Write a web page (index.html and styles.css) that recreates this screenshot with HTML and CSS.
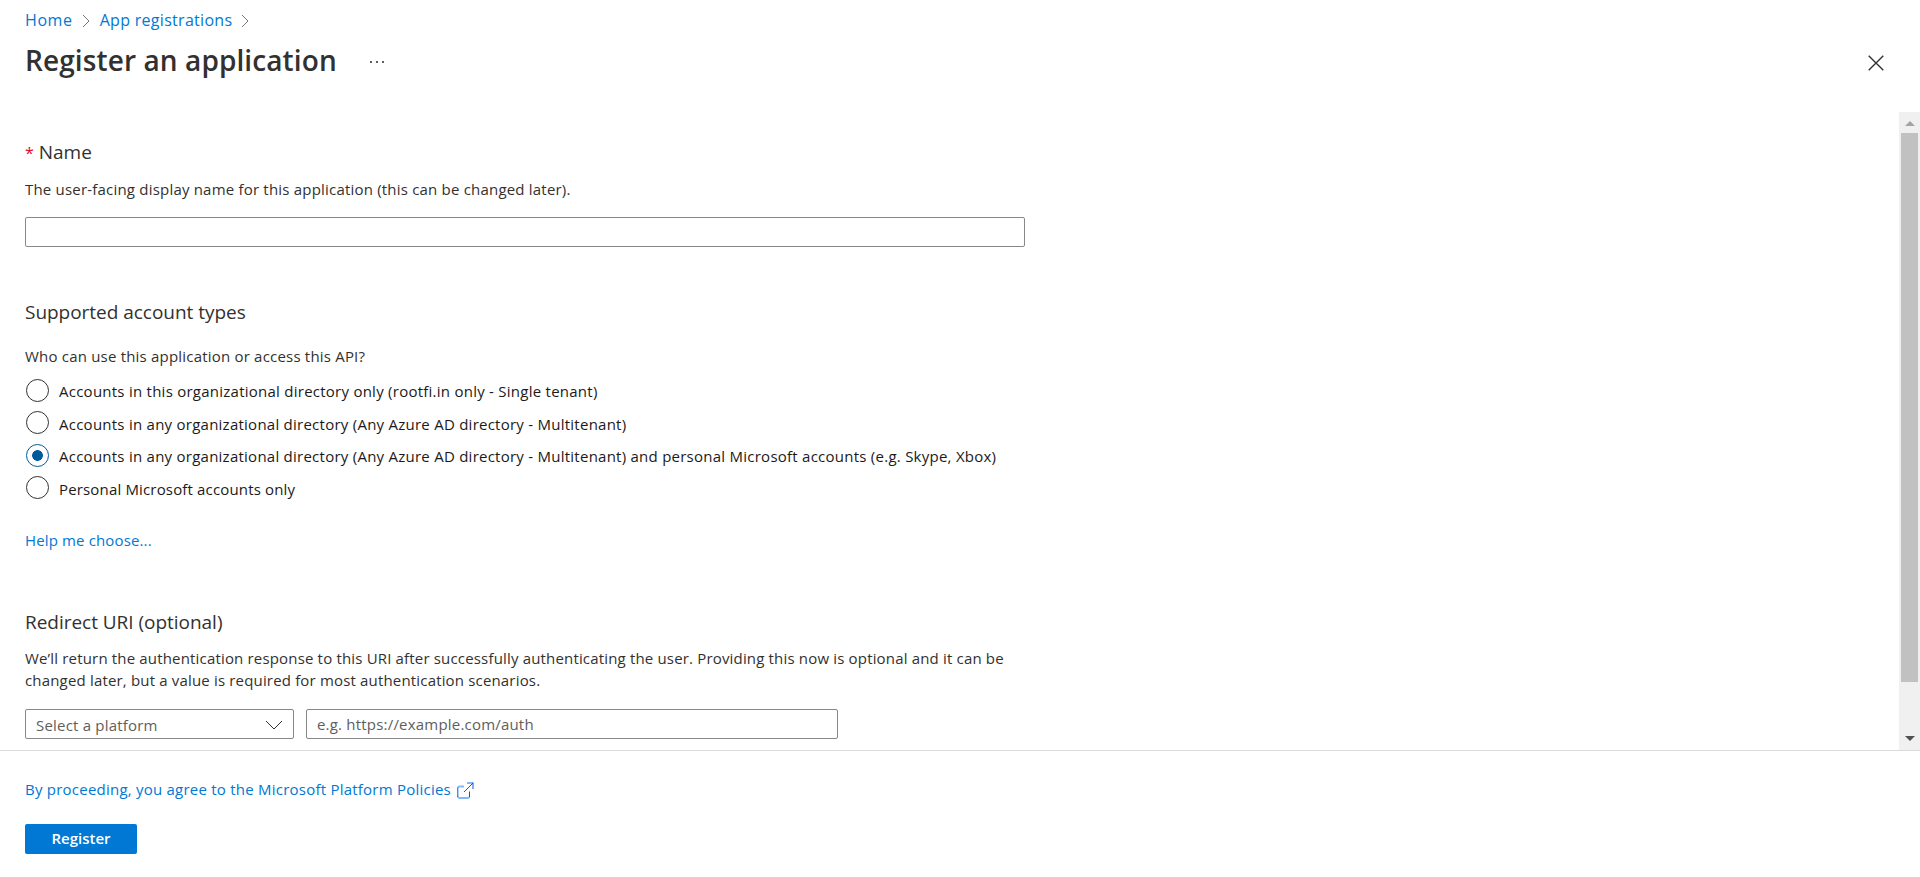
FILE: index.html
```html
<!DOCTYPE html>
<html lang="en">
<head>
    <meta charset="UTF-8">
    <meta name="viewport" content="width=device-width, initial-scale=1.0">
    <title>Register an application</title>
    <link rel="stylesheet" href="styles.css">
</head>
<body>
    <header class="header">
        <nav class="breadcrumb">
            <a href="#" class="crumb-home">Home</a>
            <svg class="crumb-arrow" width="8" height="14" viewBox="0 0 8 14"><path d="M1 1l6 6-6 6"/></svg>
            <a href="#" class="crumb-apps">App registrations</a>
            <svg class="crumb-arrow" width="8" height="14" viewBox="0 0 8 14"><path d="M1 1l6 6-6 6"/></svg>
        </nav>
        <div class="title-bar">
            <h1>Register an application</h1>
            <svg class="more" width="16" height="4" viewBox="0 0 16 4"><path d="M1 1h2v2H1zM7 1h2v2H7zM13 1h2v2h-2z"/></svg>
            <svg class="close" width="16" height="16" viewBox="0 0 16 16"><path d="M.7.7l14.6 14.6M15.3.7L.7 15.3"/></svg>
        </div>
    </header>

    <main class="content">
        <form class="form" id="registerForm">
            <h2 class="name-title"><span class="required">*</span>Name</h2>
            <p class="name-desc">The user-facing display name for this application (this can be changed later).</p>
            <input type="text" class="name-input" name="name">

            <h2 class="types-title">Supported account types</h2>
            <p class="types-desc">Who can use this application or access this API?</p>
            <div class="radios">
                <label><input type="radio" name="type"><span>Accounts in this organizational directory only (rootfi.in only - Single tenant)</span></label>
                <label><input type="radio" name="type"><span>Accounts in any organizational directory (Any Azure AD directory - Multitenant)</span></label>
                <label><input type="radio" name="type" checked><span>Accounts in any organizational directory (Any Azure AD directory - Multitenant) and personal Microsoft accounts (e.g. Skype, Xbox)</span></label>
                <label><input type="radio" name="type"><span class="personal">Personal Microsoft accounts only</span></label>
            </div>
            <a href="#" class="help">Help me choose...</a>

            <h2 class="uri-title">Redirect URI (optional)</h2>
            <p class="uri-desc">We’ll return the authentication response to this URI after successfully authenticating the user. Providing this now is optional and it can be<br>changed later, but a value is required for most authentication scenarios.</p>
            <div class="uri-row">
                <div class="select">
                    <span>Select a platform</span>
                    <svg width="18" height="10" viewBox="0 0 18 10"><path d="M1 1l8 8 8-8"/></svg>
                </div>
                <input type="text" class="uri-input" name="uri" placeholder="e.g. https://example.com/auth">
            </div>
        </form>
        <div class="scrollbar">
            <svg width="10" height="5" viewBox="0 0 10 5"><path class="up" d="M0 5l5-5 5 5z"/></svg>
            <div class="thumb"></div>
            <svg width="10" height="5" viewBox="0 0 10 5"><path class="down" d="M0 0h10l-5 5z"/></svg>
        </div>
    </main>

    <footer class="footer">
        <a href="#" class="policies">
            <span>By proceeding, you agree to the Microsoft Platform Policies</span>
            <svg width="17" height="17" viewBox="0 0 17 17"><path class="soft" d="M7 4.500H2.500q-1.500 0-1.500 1.500M1 14.500q0 1.500 1.500 1.500H11q1.500 0 1.500-1.500M10 1h6"/><path d="M.8 5.500v9.500M12.500 15V9.500M16 .5v6.500M15.800 1.200L7 10"/></svg>
        </a>
        <button type="submit" form="registerForm">Register</button>
    </footer>
</body>
</html>
```

FILE: styles.css
```css
* {
    box-sizing: border-box;
}

body {
    font-family: "Open Sans", "Noto Sans", sans-serif;
    font-size: 15px;
    line-height: 22px;
    letter-spacing: 0.2px;
    color: #323130;
    background: #fff;
    margin: 0;
    height: 877px;
    display: flex;
    flex-direction: column;
    overflow: hidden;
}

h1, h2, p {
    margin: 0;
    white-space: nowrap;
}

a {
    color: #0078d4;
    text-decoration: none;
}

svg {
    display: block;
    fill: none;
    stroke: #323130;
    flex-shrink: 0;
}

.header {
    height: 112px;
    padding: 9px 35px 0 25px;
}

.breadcrumb {
    display: flex;
    align-items: center;
    font-size: 16px;
}

.crumb-home {
    letter-spacing: 0.6px;
}

.crumb-apps {
    letter-spacing: 0.3px;
}

.crumb-arrow {
    margin: 1px 10px 0 9px;
    stroke: #767676;
}

.title-bar {
    display: flex;
    align-items: center;
    margin-top: 10px;
}

h1 {
    font-size: 28px;
    font-weight: 600;
    line-height: 38px;
    letter-spacing: 0.1px;
}

.more {
    margin: 4px 0 0 32px;
    fill: #605e5c;
    stroke: none;
}

.close {
    margin: 5px 1px 0 auto;
    stroke-width: 1.4;
}

.content {
    display: flex;
    height: 638px;
}

.form {
    flex: 1;
    padding: 27px 0 0 25px;
}

h2 {
    font-size: 19px;
    font-weight: 400;
    line-height: 26px;
    letter-spacing: -0.03px;
}

.required {
    color: #e00b1c;
    font-size: 16px;
    margin-right: 5px;
}

.name-desc {
    margin-top: 12px;
}

.name-input, .uri-input, .select {
    height: 30px;
    border: 1px solid #8a8886;
    border-radius: 2px;
    background: #fff;
}

.name-input {
    display: block;
    width: 1000px;
    margin-top: 17px;
}

.types-title {
    margin-top: 52px;
}

.types-desc {
    margin-top: 20px;
}

.radios {
    margin-top: 7px;
}

.radios label {
    display: flex;
    align-items: center;
    height: 32.5px;
    color: #1b1a19;
    white-space: nowrap;
    letter-spacing: 0.25px;
}

.radios span {
    padding-top: 2px;
}

.radios .personal {
    letter-spacing: 0.16px;
}

.radios input {
    appearance: none;
    width: 23px;
    height: 23px;
    margin: 0 10px 0 1px;
    border: 1px solid #323130;
    border-radius: 50%;
}

.radios input:checked {
    border-color: #005a9e;
    background: radial-gradient(circle, #005a9e 5px, #fff 5.7px);
}

.help {
    display: block;
    margin-top: 25px;
    letter-spacing: 0.14px;
}

.uri-title {
    margin-top: 58px;
}

.uri-desc {
    margin-top: 12px;
    letter-spacing: 0.17px;
}

.uri-row {
    display: flex;
    gap: 12px;
    margin-top: 18px;
}

.select {
    display: flex;
    align-items: center;
    justify-content: space-between;
    width: 269px;
    padding: 1px 10px 0 10px;
    color: #605e5c;
}

.uri-input {
    width: 532px;
    padding: 0 10px;
    font: inherit;
    letter-spacing: inherit;
}

.uri-input::placeholder {
    color: #605e5c;
}

.scrollbar {
    display: flex;
    flex-direction: column;
    align-items: center;
    width: 21px;
    padding-top: 9px;
    background: #f0f0f0;
}

.scrollbar svg {
    stroke: none;
}

.thumb {
    width: 17px;
    height: 549px;
    margin: 7px 0 54px;
    background: #c1c1c1;
}

.up {
    fill: #a3a3a3;
}

.down {
    fill: #505050;
}

.footer {
    flex: 1;
    border-top: 1px solid #dadada;
    padding: 27px 25px 0;
}

.policies {
    display: flex;
    align-items: center;
    letter-spacing: 0.23px;
}

.policies svg {
    margin: 2px 0 0 6px;
    stroke: #015cda;
}

.policies .soft {
    stroke: #83b9f9;
    stroke-width: 1.8;
}

button {
    display: block;
    width: 112px;
    height: 30px;
    margin-top: 24px;
    padding: 0 0 2px;
    border: none;
    border-radius: 2px;
    background: #0078d4;
    color: #fff;
    font: inherit;
    font-weight: 600;
}
```
